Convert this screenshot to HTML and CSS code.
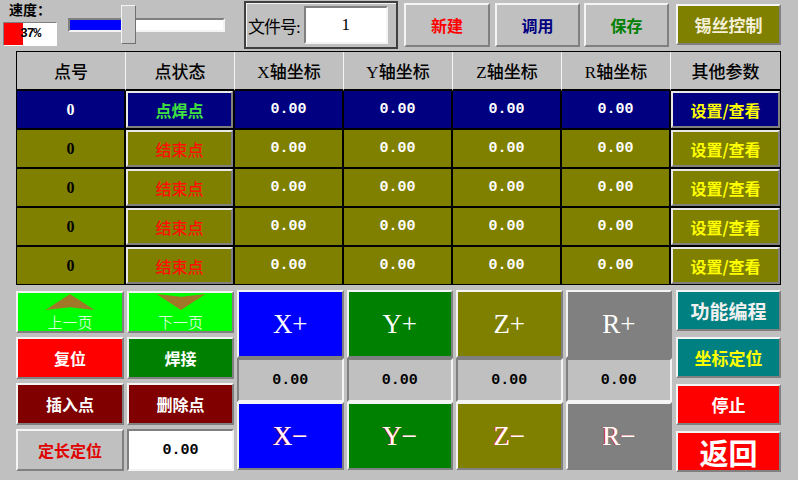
FILE: index.html
```html
<!DOCTYPE html>
<html lang="zh">
<head>
    <meta charset="UTF-8">
    <title>点焊控制</title>
    <link rel="stylesheet" href="styles.css">
</head>
<body>
    <div class="topbar">
        <div class="speed">
            <div class="speed-label">速度：</div>
            <div class="pct">
                <div class="pct-fill" style="width: 19px"></div>
                <span class="pct-text">37%</span>
            </div>
        </div>
        <div class="slider">
            <div class="track">
                <div class="track-fill" style="width: 51px"></div>
            </div>
            <div class="thumb" style="left: 53px"></div>
        </div>
        <div class="filebox">
            <span class="file-label">文件号:</span>
            <div class="file-input">1</div>
        </div>
        <div class="btn top-btn new">新建</div>
        <div class="btn top-btn load">调用</div>
        <div class="btn top-btn save">保存</div>
        <div class="btn solder">锡丝控制</div>
    </div>

    <table class="points">
        <thead>
            <tr>
                <th>点号</th>
                <th>点状态</th>
                <th>X轴坐标</th>
                <th>Y轴坐标</th>
                <th>Z轴坐标</th>
                <th>R轴坐标</th>
                <th>其他参数</th>
            </tr>
        </thead>
        <tbody>
            <tr class="row-sel">
                <td class="num">0</td>
                <td><div class="cellbtn weld">点焊点</div></td>
                <td class="coord">0.00</td>
                <td class="coord">0.00</td>
                <td class="coord">0.00</td>
                <td class="coord">0.00</td>
                <td><div class="cellbtn param">设置/查看</div></td>
            </tr>
            <tr>
                <td class="num">0</td>
                <td><div class="cellbtn end">结束点</div></td>
                <td class="coord">0.00</td>
                <td class="coord">0.00</td>
                <td class="coord">0.00</td>
                <td class="coord">0.00</td>
                <td><div class="cellbtn param">设置/查看</div></td>
            </tr>
            <tr>
                <td class="num">0</td>
                <td><div class="cellbtn end">结束点</div></td>
                <td class="coord">0.00</td>
                <td class="coord">0.00</td>
                <td class="coord">0.00</td>
                <td class="coord">0.00</td>
                <td><div class="cellbtn param">设置/查看</div></td>
            </tr>
            <tr>
                <td class="num">0</td>
                <td><div class="cellbtn end">结束点</div></td>
                <td class="coord">0.00</td>
                <td class="coord">0.00</td>
                <td class="coord">0.00</td>
                <td class="coord">0.00</td>
                <td><div class="cellbtn param">设置/查看</div></td>
            </tr>
            <tr>
                <td class="num">0</td>
                <td><div class="cellbtn end">结束点</div></td>
                <td class="coord">0.00</td>
                <td class="coord">0.00</td>
                <td class="coord">0.00</td>
                <td class="coord">0.00</td>
                <td><div class="cellbtn param">设置/查看</div></td>
            </tr>
        </tbody>
    </table>

    <div class="bottom">
        <div class="ops">
            <div class="btn page">
                <svg class="arrow" width="52" height="18" viewBox="0 0 52 18"><polygon points="26,0 52,17 26,14 0,17" fill="#a07828"/></svg>
                <span class="page-text">上一页</span>
            </div>
            <div class="btn page">
                <svg class="arrow" width="52" height="18" viewBox="0 0 52 18"><polygon points="0,0 26,3 52,0 26,17" fill="#a07828"/></svg>
                <span class="page-text">下一页</span>
            </div>
            <div class="btn op reset">复位</div>
            <div class="btn op weldbtn">焊接</div>
            <div class="btn op dark">插入点</div>
            <div class="btn op dark">删除点</div>
            <div class="btn op fixed">定长定位</div>
            <div class="field">0.00</div>
        </div>

        <div class="jog">
            <div class="btn axis ax-x">X+</div>
            <div class="btn axis ax-y">Y+</div>
            <div class="btn axis ax-z">Z+</div>
            <div class="btn axis ax-r">R+</div>
            <div class="step">0.00</div>
            <div class="step">0.00</div>
            <div class="step">0.00</div>
            <div class="step">0.00</div>
            <div class="btn axis minus ax-x">X&minus;</div>
            <div class="btn axis minus ax-y">Y&minus;</div>
            <div class="btn axis minus ax-z">Z&minus;</div>
            <div class="btn axis minus ax-r">R&minus;</div>
        </div>

        <div class="side">
            <div class="btn side-btn func">功能编程</div>
            <div class="btn side-btn locate">坐标定位</div>
            <div class="btn side-btn stop">停止</div>
            <div class="btn side-btn back">返回</div>
        </div>
    </div>
</body>
</html>
```

FILE: styles.css
```css
body {
    margin: 0;
    width: 798px;
    height: 480px;
    overflow: hidden;
    background-color: #c0c0c0;
    font-family: "Liberation Serif", "Noto Sans CJK SC", serif;
    color: #000;
}

/* raised 3d look shared by every button */
.btn {
    box-sizing: border-box;
    border: 2px solid;
    border-color: #f4f4f4 #808080 #808080 #f4f4f4;
    display: flex;
    align-items: center;
    justify-content: center;
    font-size: 16px;
    font-weight: bold;
}

/* ---- top bar ---- */
.topbar {
    display: flex;
    align-items: flex-start;
    height: 50px;
}
.speed {
    width: 57px;
}
.speed-label {
    margin: 3px 0 0 9px;
    font-size: 14px;
    line-height: 16px;
    font-weight: bold;
}
.pct {
    position: relative;
    box-sizing: border-box;
    margin: 3px 0 0 3px;
    width: 54px;
    height: 24px;
    background-color: #fff;
    border: 1px solid;
    border-color: #808080 #fff #fff #808080;
}
.pct-fill {
    height: 100%;
    background-color: #ff0000;
}
.pct-text {
    position: absolute;
    top: 3px;
    left: 16px;
    font-family: "Liberation Mono", monospace;
    font-size: 13px;
    font-weight: bold;
    letter-spacing: -1px;
}
.slider {
    position: relative;
    margin-left: 11px;
    width: 157px;
    height: 50px;
}
.track {
    box-sizing: border-box;
    margin-top: 18px;
    height: 14px;
    background-color: #fff;
    border: 2px solid;
    border-color: #808080 #f4f4f4 #f4f4f4 #808080;
}
.track-fill {
    height: 100%;
    background-color: #0000ff;
}
.thumb {
    position: absolute;
    top: 5px;
    width: 15px;
    height: 39px;
    box-sizing: border-box;
    background-color: #c8c8c8;
    border: 1px solid;
    border-color: #f4f4f4 #707070 #707070 #f4f4f4;
}
.filebox {
    box-sizing: border-box;
    display: flex;
    align-items: center;
    margin: 1px 0 0 19px;
    width: 154px;
    height: 48px;
    border: 2px solid #404040;
    box-shadow: inset 1px 1px 0 #f4f4f4;
}
.file-label {
    margin-left: 2px;
    font-size: 17px;
    letter-spacing: -1px;
}
.file-input {
    box-sizing: border-box;
    margin-left: 4px;
    width: 84px;
    height: 38px;
    background-color: #fff;
    border: 2px solid;
    border-color: #808080 #f4f4f4 #f4f4f4 #808080;
    display: flex;
    align-items: center;
    justify-content: center;
    font-size: 17px;
}
.top-btn {
    margin-top: 3px;
    height: 44px;
    width: 85px;
    background-color: #c0c0c0;
}
.new {
    margin-left: 6px;
    width: 86px;
    color: #ff0000;
}
.load {
    margin-left: 5px;
    color: #000080;
}
.save {
    margin-left: 4px;
    color: #008000;
}
.solder {
    margin: 4px 0 0 7px;
    width: 105px;
    height: 41px;
    background-color: #808000;
    color: #f4f0d8;
    font-size: 17px;
}

/* ---- point table ---- */
.points {
    margin: 1px 0 0 16px;
    width: 765px;
    table-layout: fixed;
    border-collapse: separate;
    border-spacing: 0;
    border: 1px solid #000;
}
.points th {
    height: 37px;
    padding: 0;
    font-size: 17px;
    font-weight: 500;
    background-color: #c0c0c0;
    border-right: 1px solid #f4f4f4;
    border-bottom: 2px solid #000;
}
.points th:last-child,
.points td:last-child {
    border-right: none;
}
.points td {
    height: 37px;
    padding: 0;
    text-align: center;
    background-color: #808000;
    border-right: 2px solid #000;
    border-bottom: 2px solid #000;
}
.points tbody tr:last-child td {
    border-bottom: none;
}
.points .row-sel td {
    background-color: #000080;
}
.num {
    font-size: 16px;
    font-weight: bold;
}
.row-sel .num {
    color: #fff;
}
.coord {
    color: #fff;
    font-family: "Liberation Mono", monospace;
    font-size: 15px;
    font-weight: bold;
}
.cellbtn {
    box-sizing: border-box;
    height: 37px;
    display: flex;
    align-items: center;
    justify-content: center;
    border: 2px solid;
    border-color: #e8e8e8 #808080 #808080 #e8e8e8;
    font-family: "Noto Sans CJK SC", sans-serif;
    font-size: 16px;
    font-weight: bold;
}
.weld {
    color: #40e040;
}
.end {
    color: #ff1000;
    font-weight: 500;
}
.param {
    color: #ffff00;
}

/* ---- bottom controls ---- */
.bottom {
    display: flex;
    margin-top: 5px;
    padding-left: 16px;
}
.ops {
    display: grid;
    grid-template-columns: 108px 107px;
    grid-template-rows: repeat(4, 42px);
    column-gap: 3px;
    row-gap: 4px;
    margin-top: 1px;
}
.page {
    flex-direction: column;
    justify-content: flex-start;
    background-color: #00ff00;
    color: #fff;
    font-weight: normal;
}
.arrow {
    display: block;
    margin-top: 1px;
}
.page-text {
    margin-top: 2px;
    line-height: 18px;
    font-family: "Noto Sans CJK SC", sans-serif;
    font-size: 15px;
    font-weight: 300;
}
.op {
    color: #fff;
    font-family: "Noto Sans CJK SC", sans-serif;
}
.reset {
    background-color: #ff0000;
}
.weldbtn {
    background-color: #008000;
}
.dark {
    background-color: #800000;
}
.fixed {
    background-color: #c0c0c0;
    color: #e00000;
}
.field {
    box-sizing: border-box;
    background-color: #fff;
    border: 2px solid;
    border-color: #808080 #f4f4f4 #f4f4f4 #808080;
    display: flex;
    align-items: center;
    justify-content: center;
    font-family: "Liberation Mono", monospace;
    font-size: 15px;
    font-weight: bold;
}

.jog {
    display: grid;
    grid-template-columns: repeat(4, 1fr);
    grid-template-rows: 68px 44px 68px;
    column-gap: 3px;
    margin-left: 3px;
    width: 435px;
}
.axis {
    color: #fff;
    font-size: 27px;
    font-weight: normal;
}
.minus {
    text-shadow: -1px 0 #ff3030;
}
.ax-x {
    background-color: #0000ff;
}
.ax-y {
    background-color: #008000;
}
.ax-z {
    background-color: #808000;
}
.ax-r {
    background-color: #808080;
}
.step {
    box-sizing: border-box;
    border: 2px solid;
    border-color: #808080 #f4f4f4 #f4f4f4 #808080;
    display: flex;
    align-items: center;
    justify-content: center;
    font-family: "Liberation Mono", monospace;
    font-size: 15px;
    font-weight: bold;
}

.side {
    display: flex;
    flex-direction: column;
    gap: 6px;
    margin-left: 4px;
    width: 105px;
}
.side-btn {
    height: 41px;
    font-family: "Noto Sans CJK SC", sans-serif;
    font-size: 17px;
}
.func {
    background-color: #008080;
    color: #f0f0f0;
    font-size: 19px;
}
.locate {
    background-color: #008080;
    color: #ffff00;
}
.stop {
    background-color: #ff0000;
    color: #fff;
}
.back {
    background-color: #ff0000;
    color: #fff;
    font-size: 29px;
}
```
